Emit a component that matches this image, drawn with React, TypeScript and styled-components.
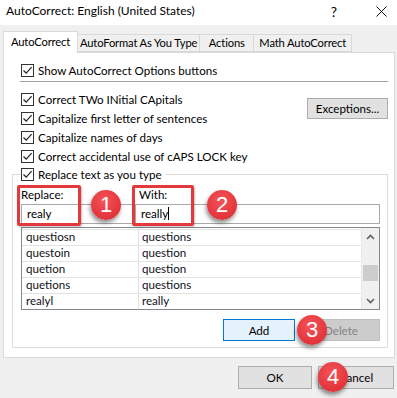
import styled, { createGlobalStyle } from 'styled-components'

const GlobalStyle = createGlobalStyle`
	html, body {
		margin: 0;
		padding: 0;
		background: #f0f0f0;
	}
	body {
		font-family: Lato, 'Liberation Sans', sans-serif;
		font-size: 11.6px;
		color: #000;
	}
`

const Window = styled.div`
	position: relative;
	width: 397px;
	height: 398px;
	overflow: hidden;
	background: #f0f0f0;
`

const TitleBar = styled.div`
	height: 25px;
	background: #fff;
	display: flex;
	align-items: flex-start;
	padding: 3px 0 0 6px;
	box-sizing: border-box;
	font-size: 12px;
`

const TitleText = styled.div`
	flex: 1;
	line-height: 15px;
`

const TitleButton = styled.div<{ $w: number }>`
	width: ${({ $w }) => $w}px;
	height: 16px;
	display: flex;
	align-items: center;
	justify-content: center;
	font-size: 14px;
`

const TabStrip = styled.div`
	height: 27px;
	display: flex;
	align-items: flex-end;
	padding-left: 3px;
`

const Tab = styled.div<{ $active?: boolean; $w: number }>`
	position: relative;
	box-sizing: border-box;
	min-width: ${({ $w }) => $w}px;
	height: ${({ $active }) => ($active ? '22px' : '18px')};
	margin-bottom: ${({ $active }) => ($active ? '-1px' : '0')};
	margin-left: ${({ $active }) => ($active ? '0' : '-1px')};
	padding: ${({ $active }) => ($active ? '3px 2px 0' : '1px 2px 0')};
	text-align: center;
	font-size: 11.2px;
	letter-spacing: -0.15px;
	background: ${({ $active }) => ($active ? '#fff' : '#f0f0f0')};
	border: 1px solid #d9d9d9;
	border-bottom: ${({ $active }) => ($active ? 'none' : '1px solid #d9d9d9')};
	z-index: ${({ $active }) => ($active ? 2 : 1)};
	white-space: nowrap;
	line-height: 14px;
`

const Panel = styled.div`
	box-sizing: border-box;
	margin-left: 3px;
	width: 392px;
	height: 306px;
	background: #fff;
	border: 1px solid #d9d9d9;
	padding: 8px 6px 0 8px;
`

const TopSection = styled.div`
	padding-left: 9px;
`

const CheckRow = styled.label`
	display: flex;
	align-items: center;
	height: 19px;
	gap: 4px;
	white-space: nowrap;
`

const Box = styled.span`
	box-sizing: border-box;
	width: 13px;
	height: 13px;
	border: 1px solid #333;
	background: #fff;
	display: flex;
	align-items: center;
	justify-content: center;
	flex-shrink: 0;
`

const Separator = styled.div`
	height: 1px;
	background: #a0a0a0;
	margin: 1px 0 8px -1px;
`

const OptionsGrid = styled.div`
	display: flex;
	justify-content: space-between;
	align-items: flex-start;
`

const Button = styled.div<{ $w?: number; $h?: number; $variant?: 'default' | 'primary' | 'disabled' }>`
	box-sizing: border-box;
	width: ${({ $w }) => $w ?? 75}px;
	height: ${({ $h }) => $h ?? 22}px;
	display: flex;
	align-items: center;
	justify-content: center;
	border: 1px solid
		${({ $variant }) => ($variant === 'primary' ? '#0078d7' : $variant === 'disabled' ? '#bfbfbf' : '#adadad')};
	background: ${({ $variant }) =>
		$variant === 'primary' ? '#e5f1fb' : $variant === 'disabled' ? '#cccccc' : '#e1e1e1'};
	color: ${({ $variant }) => ($variant === 'disabled' ? '#838383' : '#000')};
`

const ExceptionsButton = styled(Button)`
	margin-top: 8px;
`

const GroupBox = styled.div`
	box-sizing: border-box;
	height: 174px;
	margin-top: 8px;
	border: 1px solid #dcdcdc;
	padding: 0 7px 5px 8px;
`

const Legend = styled.div`
	margin: -10px 0 0 0;
	padding: 0 3px 0 0;
	width: fit-content;
	background: #fff;
`

const FieldGrid = styled.div`
	display: grid;
	grid-template-columns: 112px 1fr;
	column-gap: 2px;
	margin-top: 4px;
`

const FieldLabel = styled.div<{ $indent?: number }>`
	height: 16px;
	line-height: 14px;
	padding-left: ${({ $indent }) => $indent ?? 0}px;
`

const TextInput = styled.div`
	box-sizing: border-box;
	height: 20px;
	border: 1px solid #a9a9a9;
	padding-left: 5px;
	line-height: 18px;
	background: #fff;
`

const Caret = styled.span`
	display: inline-block;
	width: 1px;
	height: 13px;
	background: #000;
	vertical-align: -2px;
`

const ListBox = styled.div`
	box-sizing: border-box;
	margin-top: 3px;
	height: 83px;
	border: 1px solid #828790;
	display: flex;
`

const ListBody = styled.div`
	flex: 1;
	padding-top: 1px;
`

const ListRow = styled.div`
	display: grid;
	grid-template-columns: 116px 1fr;
	height: 16px;
	box-sizing: border-box;
	border-top: 1px solid #e3e3e3;
`

const ListCell = styled.div<{ $divider?: boolean }>`
	padding-left: ${({ $divider }) => ($divider ? '3px' : '4px')};
	border-left: ${({ $divider }) => ($divider ? '1px solid #e3e3e3' : 'none')};
	line-height: 14px;
	color: #101020;
`

const ScrollBar = styled.div`
	width: 17px;
	background: #f0f0f0;
	display: flex;
	flex-direction: column;
	align-items: center;
	justify-content: space-between;
	border-left: 1px solid #e8e8e8;
`

const ScrollArrow = styled.div`
	height: 17px;
	display: flex;
	align-items: center;
	justify-content: center;
`

const Thumb = styled.div`
	width: 15px;
	height: 16px;
	background: #cdcdcd;
	margin-top: 20px;
	margin-bottom: auto;
`

const ButtonRow = styled.div`
	display: flex;
	justify-content: flex-end;
	gap: 7px;
	margin-top: 9px;
`

const Footer = styled.div`
	display: flex;
	justify-content: flex-end;
	gap: 6px;
	padding: 8px 3px 0 0;
`

const Highlight = styled.div<{ $x: number; $y: number; $w: number; $h: number }>`
	position: absolute;
	left: ${({ $x }) => $x}px;
	top: ${({ $y }) => $y}px;
	width: ${({ $w }) => $w}px;
	height: ${({ $h }) => $h}px;
	box-sizing: border-box;
	border: 3px solid #e4393c;
	border-radius: 2px;
	box-shadow: 1px 1px 2px rgba(0, 0, 0, 0.25);
`

const Badge = styled.div<{ $x: number; $y: number }>`
	position: absolute;
	left: ${({ $x }) => $x - 15}px;
	top: ${({ $y }) => $y - 15}px;
	width: 30px;
	height: 30px;
	border-radius: 50%;
	background: radial-gradient(circle at 45% 35%, #f4545a 0%, #e63a40 55%, #d22c32 100%);
	box-shadow: -1px 3px 4px rgba(0, 0, 0, 0.45);
	color: #fff;
	font-family: 'Liberation Sans', Arial, sans-serif;
	font-size: 22px;
	display: flex;
	align-items: center;
	justify-content: center;
`

function Check() {
	return (
		<svg width="11" height="11" viewBox="0 0 11 11">
			<path d="M1.5 5.5 L4.2 8.2 L9.6 2.2" fill="none" stroke="#222" strokeWidth="1.2" />
		</svg>
	)
}

function CheckOption({ label }: { label: string }) {
	return (
		<CheckRow>
			<Box>
				<Check />
			</Box>
			{label}
		</CheckRow>
	)
}

const rows = [
	['questiosn', 'questions'],
	['questoin', 'question'],
	['quetion', 'question'],
	['quetions', 'questions'],
	['realyl', 'really'],
]

export default function App() {
	return (
		<Window>
			<GlobalStyle />
			<TitleBar>
				<TitleText>AutoCorrect: English (United States)</TitleText>
				<TitleButton $w={32}>?</TitleButton>
				<TitleButton $w={15} />
				<TitleButton $w={32}>
					<svg width="11" height="11" viewBox="0 0 11 11">
						<path d="M0.5 0.5 L10.5 10.5 M10.5 0.5 L0.5 10.5" stroke="#111" strokeWidth="1" />
					</svg>
				</TitleButton>
			</TitleBar>
			<TabStrip>
				<Tab $active $w={75}>
					AutoCorrect
				</Tab>
				<Tab $w={122}>AutoFormat As You Type</Tab>
				<Tab $w={55}>Actions</Tab>
				<Tab $w={99}>Math AutoCorrect</Tab>
			</TabStrip>
			<Panel>
				<TopSection>
					<CheckOption label="Show AutoCorrect Options buttons" />
					<Separator />
					<OptionsGrid>
						<div>
							<CheckOption label="Correct TWo INitial CApitals" />
							<CheckOption label="Capitalize first letter of sentences" />
							<CheckOption label="Capitalize names of days" />
							<CheckOption label="Correct accidental use of cAPS LOCK key" />
						</div>
						<ExceptionsButton $w={81} $h={21}>
							Exceptions...
						</ExceptionsButton>
					</OptionsGrid>
				</TopSection>
				<GroupBox>
					<Legend>
						<CheckOption label="Replace text as you type" />
					</Legend>
					<FieldGrid>
						<FieldLabel>Replace:</FieldLabel>
						<FieldLabel $indent={4}>With:</FieldLabel>
						<TextInput>realy</TextInput>
						<TextInput>
							really
							<Caret />
						</TextInput>
					</FieldGrid>
					<ListBox>
						<ListBody>
							{rows.map(([from, to]) => (
								<ListRow key={from}>
									<ListCell>{from}</ListCell>
									<ListCell $divider>{to}</ListCell>
								</ListRow>
							))}
						</ListBody>
						<ScrollBar>
							<ScrollArrow>
								<svg width="9" height="6" viewBox="0 0 9 6">
									<path d="M1 5 L4.5 1.5 L8 5" fill="none" stroke="#606060" strokeWidth="1.6" />
								</svg>
							</ScrollArrow>
							<Thumb />
							<ScrollArrow>
								<svg width="9" height="6" viewBox="0 0 9 6">
									<path d="M1 1 L4.5 4.5 L8 1" fill="none" stroke="#606060" strokeWidth="1.6" />
								</svg>
							</ScrollArrow>
						</ScrollBar>
					</ListBox>
					<ButtonRow>
						<Button $w={72} $variant="primary">
							Add
						</Button>
						<Button $w={78} $variant="disabled">
							Delete
						</Button>
					</ButtonRow>
				</GroupBox>
			</Panel>
			<Footer>
				<Button $w={74} $h={23}>
					OK
				</Button>
				<Button $w={76} $h={23}>
					Cancel
				</Button>
			</Footer>

			<Highlight $x={17} $y={185} $w={64} $h={41} />
			<Highlight $x={132} $y={185} $w={62} $h={41} />
			<Badge $x={106} $y={205}>1</Badge>
			<Badge $x={222} $y={205}>2</Badge>
			<Badge $x={312} $y={330}>3</Badge>
			<Badge $x={333} $y={377}>4</Badge>
		</Window>
	)
}
